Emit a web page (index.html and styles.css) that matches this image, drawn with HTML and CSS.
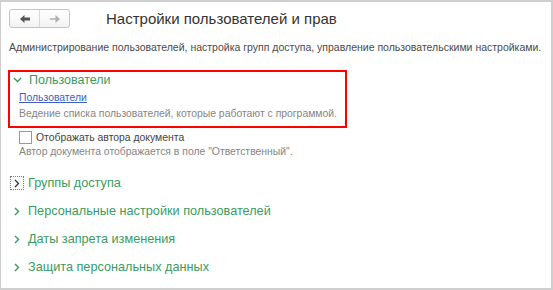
FILE: index.html
```html
<!DOCTYPE html>
<html lang="ru">
<head>
<meta charset="utf-8">
<link rel="stylesheet" href="styles.css">
</head>
<body>
<div class="window">
  <div class="header">
    <div class="nav">
      <span class="nav-btn">
        <svg width="12" height="10" viewBox="0 0 12 10"><path d="M1 5 L5.5 1 L5.5 3.6 L11 3.6 L11 6.4 L5.5 6.4 L5.5 9 Z" fill="#555"/></svg>
      </span>
      <span class="nav-btn">
        <svg width="12" height="10" viewBox="0 0 12 10"><path d="M11 5 L6.5 1 L6.5 4.2 L1 4.2 L1 5.8 L6.5 5.8 L6.5 9 Z" fill="#b0b0b0"/></svg>
      </span>
    </div>
    <div class="title">Настройки пользователей и прав</div>
  </div>
  <div class="desc">Администрирование пользователей, настройка групп доступа, управление пользовательскими настройками.</div>

  <div class="group-open">
    <div class="group-title">
      <span class="chev-down"><svg width="9" height="6" viewBox="0 0 9 6"><path d="M1 1 L4.5 4.5 L8 1" fill="none" stroke="#3a9b5f" stroke-width="1.4"/></svg></span>
      <span>Пользователи</span>
    </div>
    <a class="link" href="#">Пользователи</a>
    <div class="hint">Ведение списка пользователей, которые работают с программой.</div>
  </div>

  <div class="check-row">
    <span class="checkbox"></span>
    <span class="check-label">Отображать автора документа</span>
  </div>
  <div class="hint hint-out">Автор документа отображается в поле "Ответственный".</div>

  <div class="groups">
    <div class="group-row">
      <span class="chev chev-focus"><svg width="6" height="9" viewBox="0 0 6 9"><path d="M1 1 L4.5 4.5 L1 8" fill="none" stroke="#333" stroke-width="1.3"/></svg></span>
      <span>Группы доступа</span>
    </div>
    <div class="group-row">
      <span class="chev"><svg width="6" height="9" viewBox="0 0 6 9"><path d="M1 1 L4.5 4.5 L1 8" fill="none" stroke="#3a9b5f" stroke-width="1.4"/></svg></span>
      <span>Персональные настройки пользователей</span>
    </div>
    <div class="group-row">
      <span class="chev"><svg width="6" height="9" viewBox="0 0 6 9"><path d="M1 1 L4.5 4.5 L1 8" fill="none" stroke="#3a9b5f" stroke-width="1.4"/></svg></span>
      <span>Даты запрета изменения</span>
    </div>
    <div class="group-row">
      <span class="chev"><svg width="6" height="9" viewBox="0 0 6 9"><path d="M1 1 L4.5 4.5 L1 8" fill="none" stroke="#3a9b5f" stroke-width="1.4"/></svg></span>
      <span>Защита персональных данных</span>
    </div>
  </div>
</div>
</body>
</html>
```

FILE: styles.css
```css
* { box-sizing: border-box; }
html, body { margin: 0; padding: 0; background: #fff; }
body { font-family: "Liberation Sans", Arial, sans-serif; }

.window {
  width: 553px;
  height: 290px;
  border: 1px solid #cfcfcf;
  border-top-width: 2px;
  border-right-width: 2px;
  border-bottom-width: 2px;
  padding-left: 8px;
  background: #fff;
  overflow: hidden;
}

.header {
  display: flex;
  align-items: center;
  margin-top: 7px;
  height: 19px;
}
.nav {
  display: flex;
  width: 61px;
  height: 19px;
  border: 1px solid #c4c4c4;
  border-radius: 3px;
  background: linear-gradient(#ffffff, #f3f3f3);
}
.nav-btn {
  flex: 1;
  display: flex;
  align-items: center;
  justify-content: center;
}
.nav-btn + .nav-btn { border-left: 1px solid #d8d8d8; }
.title {
  margin-left: 36px;
  font-size: 15px;
  color: #333;
  line-height: 19px;
}

.desc {
  margin-top: 12px;
  font-size: 10.5px;
  line-height: 14px;
  color: #4a4a4a;
  white-space: nowrap;
}

.group-open {
  margin-top: 16px;
  margin-left: -1px;
  width: 339px;
  border: 2px solid #ff0000;
  padding: 0 0 5px 0;
}
.group-title {
  display: flex;
  align-items: center;
  height: 15px;
  font-size: 12.5px;
  color: #3a9b5f;
}
.chev-down {
  display: flex;
  margin: 0 7px 0 3px;
}
.link {
  display: block;
  margin: 4px 0 0 9px;
  width: max-content;
  font-size: 10.4px;
  line-height: 14px;
  color: #3e5fc6;
  text-decoration: underline;
}
.hint {
  margin: 2px 0 0 9px;
  font-size: 10.4px;
  line-height: 14px;
  color: #858585;
  white-space: nowrap;
}

.check-row {
  display: flex;
  align-items: center;
  margin: 1px 0 0 10px;
  height: 16px;
}
.checkbox {
  width: 13px;
  height: 13px;
  border: 1px solid #9a9a9a;
  background: #fff;
}
.check-label {
  margin-left: 4px;
  font-size: 10.4px;
  color: #444;
}
.hint-out { margin: 0 0 0 10px; }

.groups { margin-top: 10px; }
.group-row {
  display: flex;
  align-items: center;
  height: 28px;
  font-size: 12.7px;
  color: #3a9b5f;
}
.chev {
  width: 14px;
  height: 14px;
  margin: 0 4px 0 1px;
  display: flex;
  align-items: center;
  justify-content: center;
}
.chev-focus { border: 1px dotted #777; }
```
